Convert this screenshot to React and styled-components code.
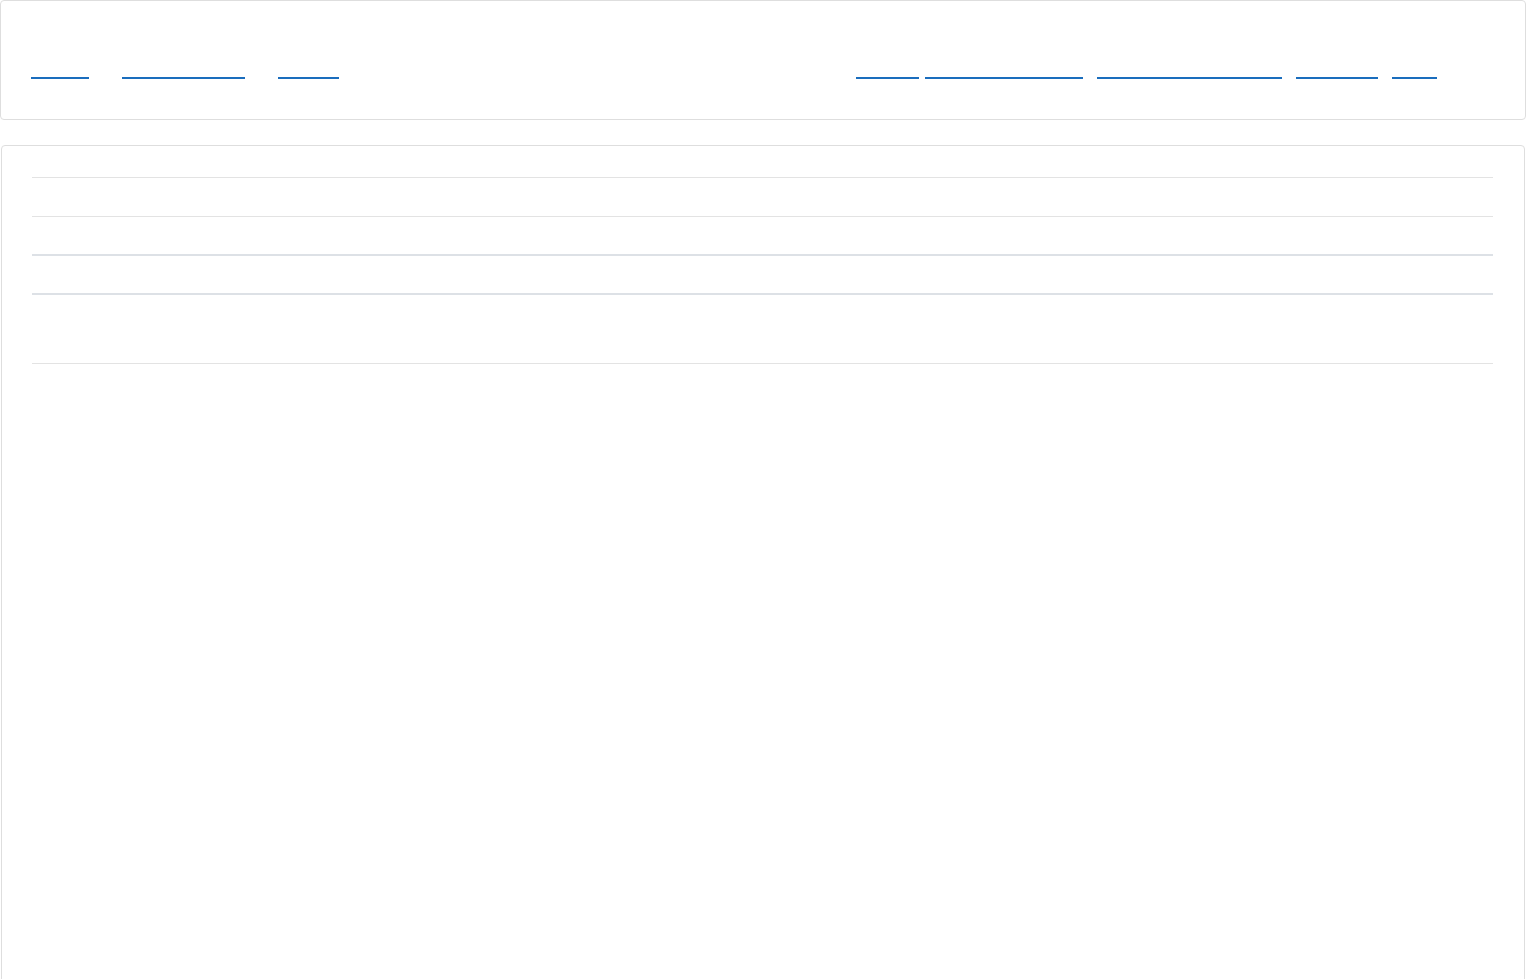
import React from "react";
import styled, { createGlobalStyle } from "styled-components";

const GlobalStyle = createGlobalStyle`
  html, body {
    margin: 0;
    padding: 0;
    background: #ffffff;
    font-family: "Liberation Sans", Arial, sans-serif;
  }
  * { box-sizing: border-box; }
`;

const Page = styled.div`
  width: 1527px;
  padding-right: 1px;
`;

const NavPanel = styled.nav`
  height: 120px;
  border: 1px solid #dedede;
  border-radius: 4px;
  padding: 58px 88px 0 30px;
  display: flex;
  justify-content: space-between;
  align-items: flex-start;
`;

const LinkGroup = styled.div`
  display: flex;
  gap: ${(p) => p.$gap}px;
`;

const NavLink = styled.a`
  display: block;
  width: ${(p) => p.$w}px;
  height: 20px;
  font-size: 14px;
  line-height: 18px;
  color: transparent;
  text-decoration: none;
  border-bottom: 2px solid #1a6dbd;
  white-space: nowrap;
  overflow: hidden;
  margin-left: ${(p) => p.$ml || 0}px;
`;

const ContentPanel = styled.section`
  margin: 25px 1px 0 1px;
  min-height: 860px;
  border: 1px solid #dedede;
  border-radius: 4px;
  padding: 31px 31px 0 30px;
`;

const Row = styled.div`
  height: ${(p) => p.$h}px;
  border-top: ${(p) => (p.$thick ? "2px solid #dde1e6" : "1px solid #e3e3e3")};
  color: transparent;
  font-size: 14px;
`;

const leftLinks = [
  { label: "Home", w: 58 },
  { label: "Dashboard", w: 123 },
  { label: "Blog", w: 61 },
];

const rightLinks = [
  { label: "About", w: 63, ml: 0 },
  { label: "Documentation", w: 158, ml: 6 },
  { label: "Getting Started", w: 185, ml: 14 },
  { label: "Support", w: 82, ml: 14 },
  { label: "Login", w: 45, ml: 14 },
];

const rows = [
  { h: 39 },
  { h: 38 },
  { h: 39, thick: true },
  { h: 70, thick: true },
  { h: 40 },
];

export default function App() {
  return (
    <Page>
      <GlobalStyle />
      <NavPanel>
        <LinkGroup $gap={33}>
          {leftLinks.map((l) => (
            <NavLink key={l.label} href="#" $w={l.w}>
              {l.label}
            </NavLink>
          ))}
        </LinkGroup>
        <LinkGroup $gap={0}>
          {rightLinks.map((l) => (
            <NavLink key={l.label} href="#" $w={l.w} $ml={l.ml}>
              {l.label}
            </NavLink>
          ))}
        </LinkGroup>
      </NavPanel>
      <ContentPanel>
        {rows.map((r, i) => (
          <Row key={i} $h={r.h} $thick={r.thick} />
        ))}
      </ContentPanel>
    </Page>
  );
}
